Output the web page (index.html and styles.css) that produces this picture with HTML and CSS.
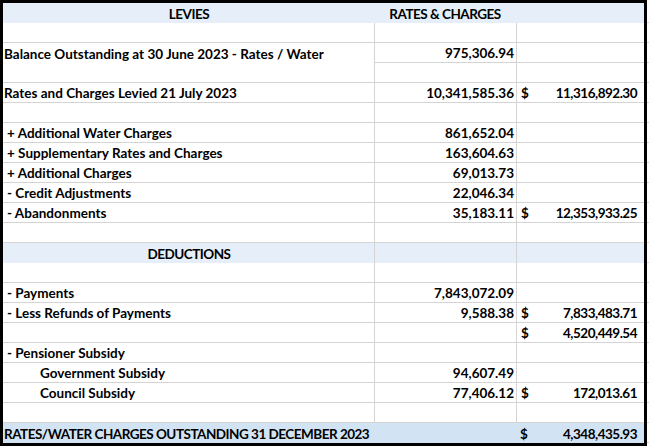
FILE: index.html
```html
<!DOCTYPE html>
<html>
<head>
<meta charset="utf-8">
<link rel="stylesheet" href="styles.css">
</head>
<body>
<div class="sheet">
  <div class="row head"><div class="c1 center caps">LEVIES</div><div class="c2 center caps">RATES &amp; CHARGES</div><div class="c3"></div></div>
  <div class="row"><div class="c1"></div><div class="c2"></div><div class="c3"></div></div>
  <div class="row noline1"><div class="c1">Balance Outstanding at 30 June 2023 - Rates / Water</div><div class="c2 num">975,306.94</div><div class="c3"></div></div>
  <div class="row"><div class="c1"></div><div class="c2"></div><div class="c3"></div></div>
  <div class="row"><div class="c1">Rates and Charges Levied 21 July 2023</div><div class="c2 num">10,341,585.36</div><div class="c3 money"><span>$</span><span class="amt">11,316,892.30</span></div></div>
  <div class="row"><div class="c1"></div><div class="c2"></div><div class="c3"></div></div>
  <div class="row"><div class="c1 i1">+ Additional Water Charges</div><div class="c2 num">861,652.04</div><div class="c3"></div></div>
  <div class="row"><div class="c1 i1">+ Supplementary Rates and Charges</div><div class="c2 num">163,604.63</div><div class="c3"></div></div>
  <div class="row"><div class="c1 i1">+ Additional Charges</div><div class="c2 num">69,013.73</div><div class="c3"></div></div>
  <div class="row"><div class="c1 i1">- Credit Adjustments</div><div class="c2 num">22,046.34</div><div class="c3"></div></div>
  <div class="row"><div class="c1 i1">- Abandonments</div><div class="c2 num">35,183.11</div><div class="c3 money"><span>$</span><span class="amt">12,353,933.25</span></div></div>
  <div class="row"><div class="c1"></div><div class="c2"></div><div class="c3"></div></div>
  <div class="row band"><div class="c1 center caps">DEDUCTIONS</div><div class="c2"></div><div class="c3"></div></div>
  <div class="row"><div class="c1"></div><div class="c2"></div><div class="c3"></div></div>
  <div class="row"><div class="c1 i1">- Payments</div><div class="c2 num">7,843,072.09</div><div class="c3"></div></div>
  <div class="row"><div class="c1 i1">- Less Refunds of Payments</div><div class="c2 num">9,588.38</div><div class="c3 money"><span>$</span><span class="amt">7,833,483.71</span></div></div>
  <div class="row"><div class="c1"></div><div class="c2"></div><div class="c3 money"><span>$</span><span class="amt">4,520,449.54</span></div></div>
  <div class="row"><div class="c1 i1">- Pensioner Subsidy</div><div class="c2"></div><div class="c3"></div></div>
  <div class="row"><div class="c1 i2">Government Subsidy</div><div class="c2 num">94,607.49</div><div class="c3"></div></div>
  <div class="row"><div class="c1 i2">Council Subsidy</div><div class="c2 num">77,406.12</div><div class="c3 money"><span>$</span><span class="amt">172,013.61</span></div></div>
  <div class="row"><div class="c1"></div><div class="c2"></div><div class="c3"></div></div>
  <div class="row total"><div class="c1 wide caps">RATES/WATER CHARGES OUTSTANDING 31 DECEMBER 2023</div><div class="c3 money"><span>$</span><span class="amt">4,348,435.93</span></div></div>
</div>
</body>
</html>
```
FILE: styles.css
```css
html, body {
  margin: 0;
  padding: 0;
}
body {
  width: 649px;
  height: 447px;
  background: #fff repeating-linear-gradient(to bottom, transparent 0, transparent 19px, #d4d4d4 19px, #d4d4d4 20px);
  background-position: 0 3px;
  font-family: "Lato", "Liberation Sans", sans-serif;
  font-weight: 700;
  font-size: 13.5px;
  color: #000;
}
.sheet {
  width: 641px;
  border: 3px solid #000;
  background: #fff;
  display: flex;
  flex-direction: column;
}
.row {
  display: grid;
  grid-template-columns: 371px 142px 128px;
  height: 20px;
}
.row > div {
  box-sizing: border-box;
  height: 20px;
  padding-top: 1px;
  border-bottom: 1px solid #d4d4d4;
  display: flex;
  align-items: center;
  white-space: nowrap;
  line-height: 18px;
}
.c1 {
  padding-left: 1px;
}
.c2, .c3 {
  border-left: 1px solid #d4d4d4;
}
.center {
  justify-content: center;
}
.caps {
  letter-spacing: -0.5px;
}
.num {
  justify-content: flex-end;
  padding-right: 2px;
}
.money {
  justify-content: space-between;
  padding-left: 4px;
  padding-right: 7px;
}
.amt {
  letter-spacing: -0.5px;
}
.i1 {
  padding-left: 4px;
}
.i2 {
  padding-left: 37px;
}
.head > div {
  background: #e6eff9;
  border-left: none;
  border-bottom: none;
}
.band > div {
  background: #e6eff9;
  border-bottom: none;
}
.noline1 > .c1 {
  border-bottom: none;
}
.total > div {
  background: #d2e4f4;
  border-left: none;
  border-bottom: none;
}
.wide {
  grid-column: span 2;
}
```
